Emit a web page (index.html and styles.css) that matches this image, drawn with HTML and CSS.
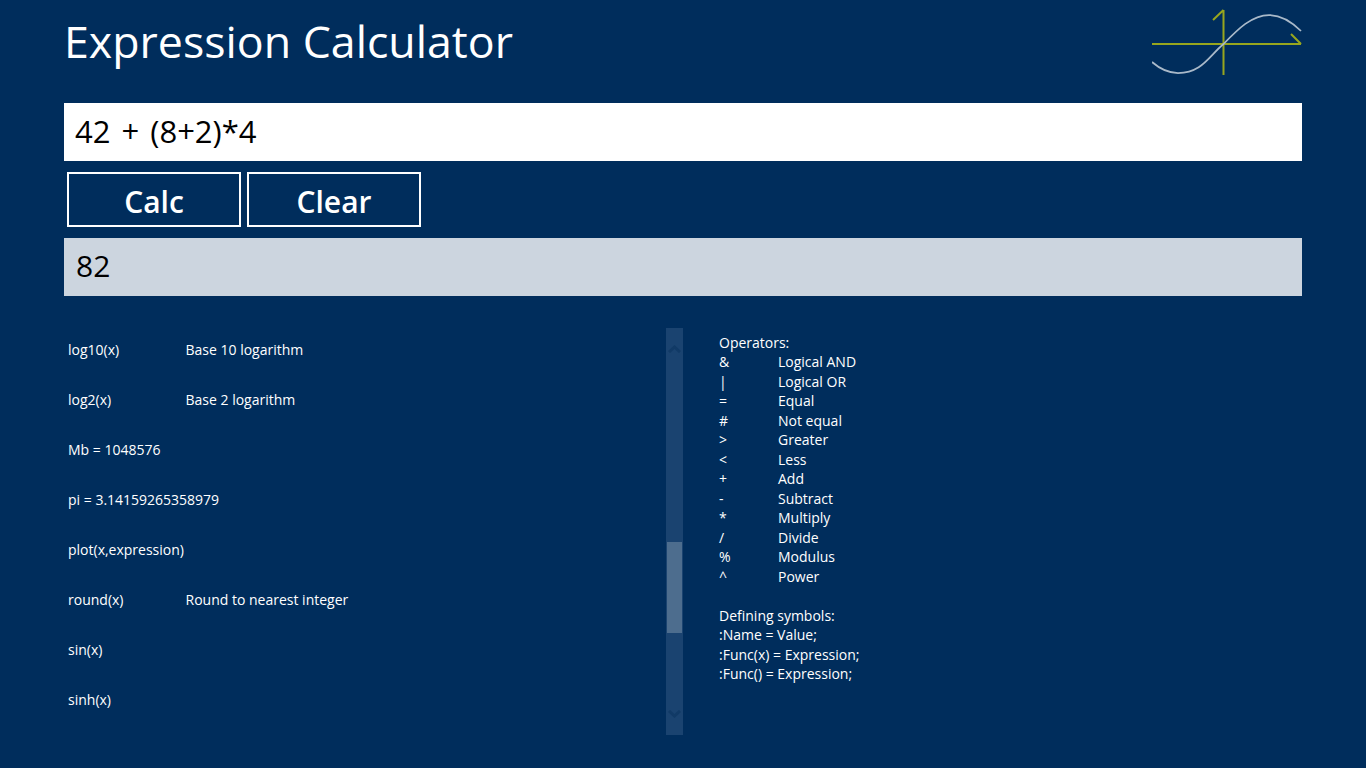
FILE: index.html
```html
<!DOCTYPE html>
<html lang="en">
<head>
<meta charset="utf-8">
<title>Expression Calculator</title>
<link rel="stylesheet" href="styles.css">
</head>
<body>
<main class="app">
  <header class="header">
    <h1 class="title">Expression Calculator</h1>
    <svg class="logo" width="150" height="66" viewBox="0 0 150 66" fill="none">
      <path class="logo-axis" d="M0 35H149M71.5 66V1M61 11L71.5 1M139 25L149 35"/>
      <path class="logo-curve" d="M0 53C8 60 17 64 26 64C50 64 57 47 71.5 35C86 20 100 6 117 6C130 6 140 13 149 22"/>
    </svg>
  </header>
  <div class="field field-input">42 + (8+2)*4</div>
  <div class="buttons">
    <button class="btn">Calc</button>
    <button class="btn">Clear</button>
  </div>
  <div class="field field-output">82</div>
  <section class="lower">
    <div class="list-pane">
      <ul class="list">
        <li class="row"><span class="name">log10(x)</span><span>Base 10 logarithm</span></li>
        <li class="row"><span class="name">log2(x)</span><span>Base 2 logarithm</span></li>
        <li class="row"><span>Mb = 1048576</span></li>
        <li class="row"><span>pi = 3.14159265358979</span></li>
        <li class="row"><span>plot(x,expression)</span></li>
        <li class="row"><span class="name">round(x)</span><span>Round to nearest integer</span></li>
        <li class="row"><span>sin(x)</span></li>
        <li class="row"><span>sinh(x)</span></li>
      </ul>
      <div class="scrollbar">
        <svg class="arrow" width="13" height="8" viewBox="0 0 13 8" fill="none"><path d="M1 7L6.500 2L12 7"/></svg>
        <div class="track"><div class="thumb"></div></div>
        <svg class="arrow arrow-down" width="13" height="8" viewBox="0 0 13 8" fill="none"><path d="M1 1L6.500 6L12 1"/></svg>
      </div>
    </div>
    <div class="help">
      <p class="help-line">Operators:</p>
      <dl class="ops">
        <dt>&amp;</dt><dd>Logical AND</dd>
        <dt>|</dt><dd>Logical OR</dd>
        <dt>=</dt><dd>Equal</dd>
        <dt>#</dt><dd>Not equal</dd>
        <dt>&gt;</dt><dd>Greater</dd>
        <dt>&lt;</dt><dd>Less</dd>
        <dt>+</dt><dd>Add</dd>
        <dt>-</dt><dd>Subtract</dd>
        <dt>*</dt><dd>Multiply</dd>
        <dt>/</dt><dd>Divide</dd>
        <dt>%</dt><dd>Modulus</dd>
        <dt>^</dt><dd>Power</dd>
      </dl>
      <p class="help-line help-gap">Defining symbols:</p>
      <p class="help-line">:Name = Value;</p>
      <p class="help-line">:Func(x) = Expression;</p>
      <p class="help-line">:Func() = Expression;</p>
    </div>
  </section>
</main>
</body>
</html>
```
FILE: styles.css
```css
* { box-sizing: border-box; }
html, body { margin: 0; height: 100%; }
body {
  background: #002d5c;
  color: #fff;
  font-family: "Open Sans", "Noto Sans", sans-serif;
  overflow: hidden;
}
.app { width: 1238px; margin-left: 64px; }
.header {
  height: 103px;
  display: flex;
  justify-content: space-between;
  align-items: flex-start;
}
.title {
  margin: 11px 0 0 0;
  font-size: 44.7px;
  line-height: 60px;
  font-weight: 400;
}
.logo { margin-top: 9px; }
.logo-axis { stroke: #97a61e; stroke-width: 2; }
.logo-curve { stroke: #a9b9c9; stroke-width: 1.750; }
.field {
  height: 58px;
  display: flex;
  align-items: center;
  color: #000;
  font-size: 31px;
  padding: 0 0 3px 11px;
}
.field-input { background: #fff; word-spacing: 3px; }
.field-output { background: #ccd5df; padding: 0 0 4px 12px; font-size: 30px; }
.buttons {
  display: flex;
  gap: 6px;
  padding: 11px 3px;
}
.btn {
  width: 174px;
  height: 55px;
  background: transparent;
  border: 2px solid #fff;
  border-radius: 0;
  color: #fff;
  font: 600 30px "Open Sans", "Noto Sans", sans-serif;
  padding: 3px 0 0;
}
.lower {
  display: flex;
  margin-top: 32px;
}
.list-pane {
  width: 619px;
  height: 407px;
  display: flex;
  justify-content: space-between;
  flex-shrink: 0;
}
.list {
  list-style: none;
  margin: 0;
  padding: 0 0 0 4px;
  flex: 1;
}
.row {
  height: 50px;
  display: flex;
  align-items: center;
  font-size: 14px;
  white-space: nowrap;
}
.row:first-child { margin-top: -4px; }
.name { width: 117.500px; }
.scrollbar {
  width: 17px;
  background: #1a4370;
  display: flex;
  flex-direction: column;
  align-items: center;
}
.arrow { flex: none; margin: 17px 0 19px; }
.arrow-down { margin: 19px 0 17px; }
.arrow path { stroke: #113a66; stroke-width: 3; }
.track {
  flex: 1;
  width: 100%;
  padding-top: 170px;
  display: flex;
  justify-content: center;
}
.thumb { width: 15px; height: 91px; background: #4d6d8e; }
.help {
  margin-left: 36px;
  padding-top: 4.500px;
  font-size: 14px;
  line-height: 19.500px;
}
.help-line { margin: 0; }
.help-gap { margin-top: 19.500px; }
.ops {
  margin: 0;
  display: grid;
  grid-template-columns: 59px auto;
}
.ops dt, .ops dd { margin: 0; }
```
